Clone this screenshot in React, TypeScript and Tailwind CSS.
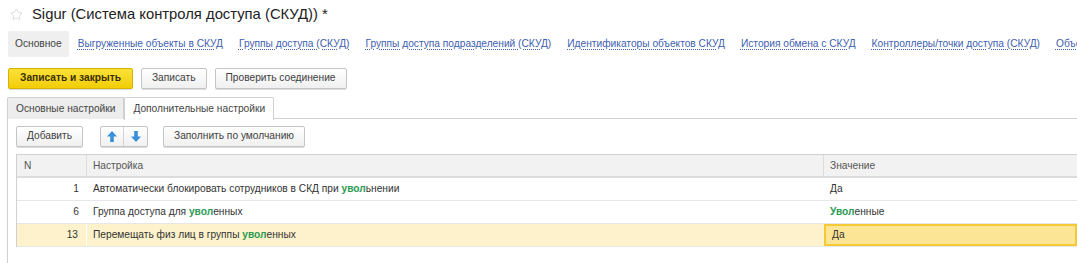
import { Star } from 'lucide-react';

const navLinks = [
  'Выгруженные объекты в СКУД',
  'Группы доступа (СКУД)',
  'Группы доступа подразделений (СКУД)',
  'Идентификаторы объектов СКУД',
  'История обмена с СКУД',
  'Контроллеры/точки доступа (СКУД)',
  'Объекты доступа (СКУД)',
];

const btn =
  'h-[21px] px-[10px] rounded-[2px] border border-[#c4c4c4] bg-gradient-to-b from-white to-[#f0f0f0] shadow-[0_1px_0_#dcdcdc] text-[10.2px] text-[#404040] leading-none flex items-center';

const Hl = ({ children }: { children: string }) => (
  <span className="font-bold text-[#2b9a52]">{children}</span>
);

const Arrow = ({ down }: { down?: boolean }) => (
  <svg width="10" height="11" viewBox="0 0 10 11" className={down ? 'rotate-180' : ''}>
    <path d="M5 0 L10 5.5 L6.8 5.5 L6.8 11 L3.2 11 L3.2 5.5 L0 5.5 Z" fill="#3a8fdb" />
  </svg>
);

const rows = [
  { n: 1, pre: 'Автоматически блокировать сотрудников в СКД при ', hl: 'увол', post: 'ьнении', value: 'Да' },
  { n: 6, pre: 'Группа доступа для ', hl: 'увол', post: 'енных', value: null },
  { n: 13, pre: 'Перемещать физ лиц в группы ', hl: 'увол', post: 'енных', value: 'Да', selected: true },
];

export default function App() {
  return (
    <div className="w-[1077px] h-[263px] overflow-hidden bg-white font-['Liberation_Sans',Arial,sans-serif] text-[#333]">
      {/* Title */}
      <div className="flex items-center h-[28px] pl-[10px] pt-[1px]">
        <Star size={13} strokeWidth={1.2} className="text-[#c8c8c8]" />
        <span className="ml-[9px] text-[14.8px] text-[#222]">Sigur (Система контроля доступа (СКУД)) *</span>
      </div>

      {/* Nav */}
      <div className="flex items-center h-[26px] mt-[3px] pl-[8px] whitespace-nowrap overflow-hidden">
        <div className="h-full px-[7px] flex items-center bg-[#efefef] rounded-[2px] text-[10.2px] text-[#444]">
          Основное
        </div>
        <div className="flex items-center gap-[16px] ml-[9px]">
          {navLinks.map(l => (
            <span
              key={l}
              className="text-[10.2px] text-[#4060b0] underline decoration-dotted decoration-[#4060b0] underline-offset-[2px]"
            >
              {l}
            </span>
          ))}
        </div>
      </div>

      {/* Command bar */}
      <div className="flex items-center gap-[8px] mt-[11px] pl-[8px]">
        <div className="h-[21px] px-[11px] rounded-[2px] border border-[#d4b400] bg-gradient-to-b from-[#fbe135] to-[#f2cd00] shadow-[0_1px_0_#dcdcdc] text-[10.2px] font-bold text-[#3a3000] leading-none flex items-center">
          Записать и закрыть
        </div>
        <div className={btn}>Записать</div>
        <div className={btn}>Проверить соединение</div>
      </div>

      {/* Tabs */}
      <div className="flex items-end mt-[8px] pl-[7px] h-[22px]">
        <div className="h-[22px] px-[8px] flex items-center bg-[#ededed] border border-b-0 border-[#d0d0d0] text-[10.2px] text-[#444] rounded-tl-[2px]">
          Основные настройки
        </div>
        <div className="h-[23px] px-[8px] flex items-center bg-white border border-b-0 border-[#d0d0d0] text-[10.2px] text-[#444] -mb-px relative z-10 rounded-t-[2px]">
          Дополнительные настройки
        </div>
        <div className="flex-1 border-b border-[#d0d0d0]" />
      </div>

      {/* Panel */}
      <div className="ml-[7px] border-l border-[#d0d0d0] pl-[8px] pt-[7px] h-[200px]">
        <div className="flex items-center">
          <div className={btn}>Добавить</div>
          <div className="ml-[17px] h-[21px] flex rounded-[2px] border border-[#c4c4c4] bg-gradient-to-b from-white to-[#f0f0f0] shadow-[0_1px_0_#dcdcdc]">
            <div className="w-[23px] flex items-center justify-center border-r border-[#d4d4d4]">
              <Arrow />
            </div>
            <div className="w-[23px] flex items-center justify-center">
              <Arrow down />
            </div>
          </div>
          <div className={`${btn} ml-[15px]`}>Заполнить по умолчанию</div>
        </div>

        {/* Table */}
        <div className="mt-[7px] border-t border-l border-[#d0d0d0] text-[10.2px]">
          <div className="flex h-[23px] bg-[#f2f2f2] border-b-2 border-[#dcdcdc] text-[#555]">
            <div className="w-[70px] pl-[7px] flex items-center border-r border-[#dcdcdc]">N</div>
            <div className="w-[737px] pl-[6px] flex items-center border-r border-[#dcdcdc]">Настройка</div>
            <div className="flex-1 pl-[6px] flex items-center">Значение</div>
          </div>
          {rows.map(r => (
            <div
              key={r.n}
              className={`flex h-[23px] border-b border-[#e6e6e6] ${r.selected ? 'bg-[#fdf2cc]' : 'bg-white'}`}
            >
              <div
                className={`w-[70px] pr-[8px] flex items-center justify-end ${r.selected ? 'border-r border-white' : ''}`}
              >
                {r.n}
              </div>
              <div className="w-[737px] pl-[6px] flex items-center whitespace-pre">
                <span>
                  {r.pre}
                  <Hl>{r.hl}</Hl>
                  {r.post}
                </span>
              </div>
              <div
                className={`flex-1 pl-[6px] flex items-center ${
                  r.selected ? 'bg-[#fde596] border-2 border-[#f6c937] pl-[4px]' : ''
                }`}
              >
                {r.value ?? (
                  <span>
                    <Hl>Увол</Hl>енные
                  </span>
                )}
              </div>
            </div>
          ))}
        </div>
      </div>
    </div>
  );
}
